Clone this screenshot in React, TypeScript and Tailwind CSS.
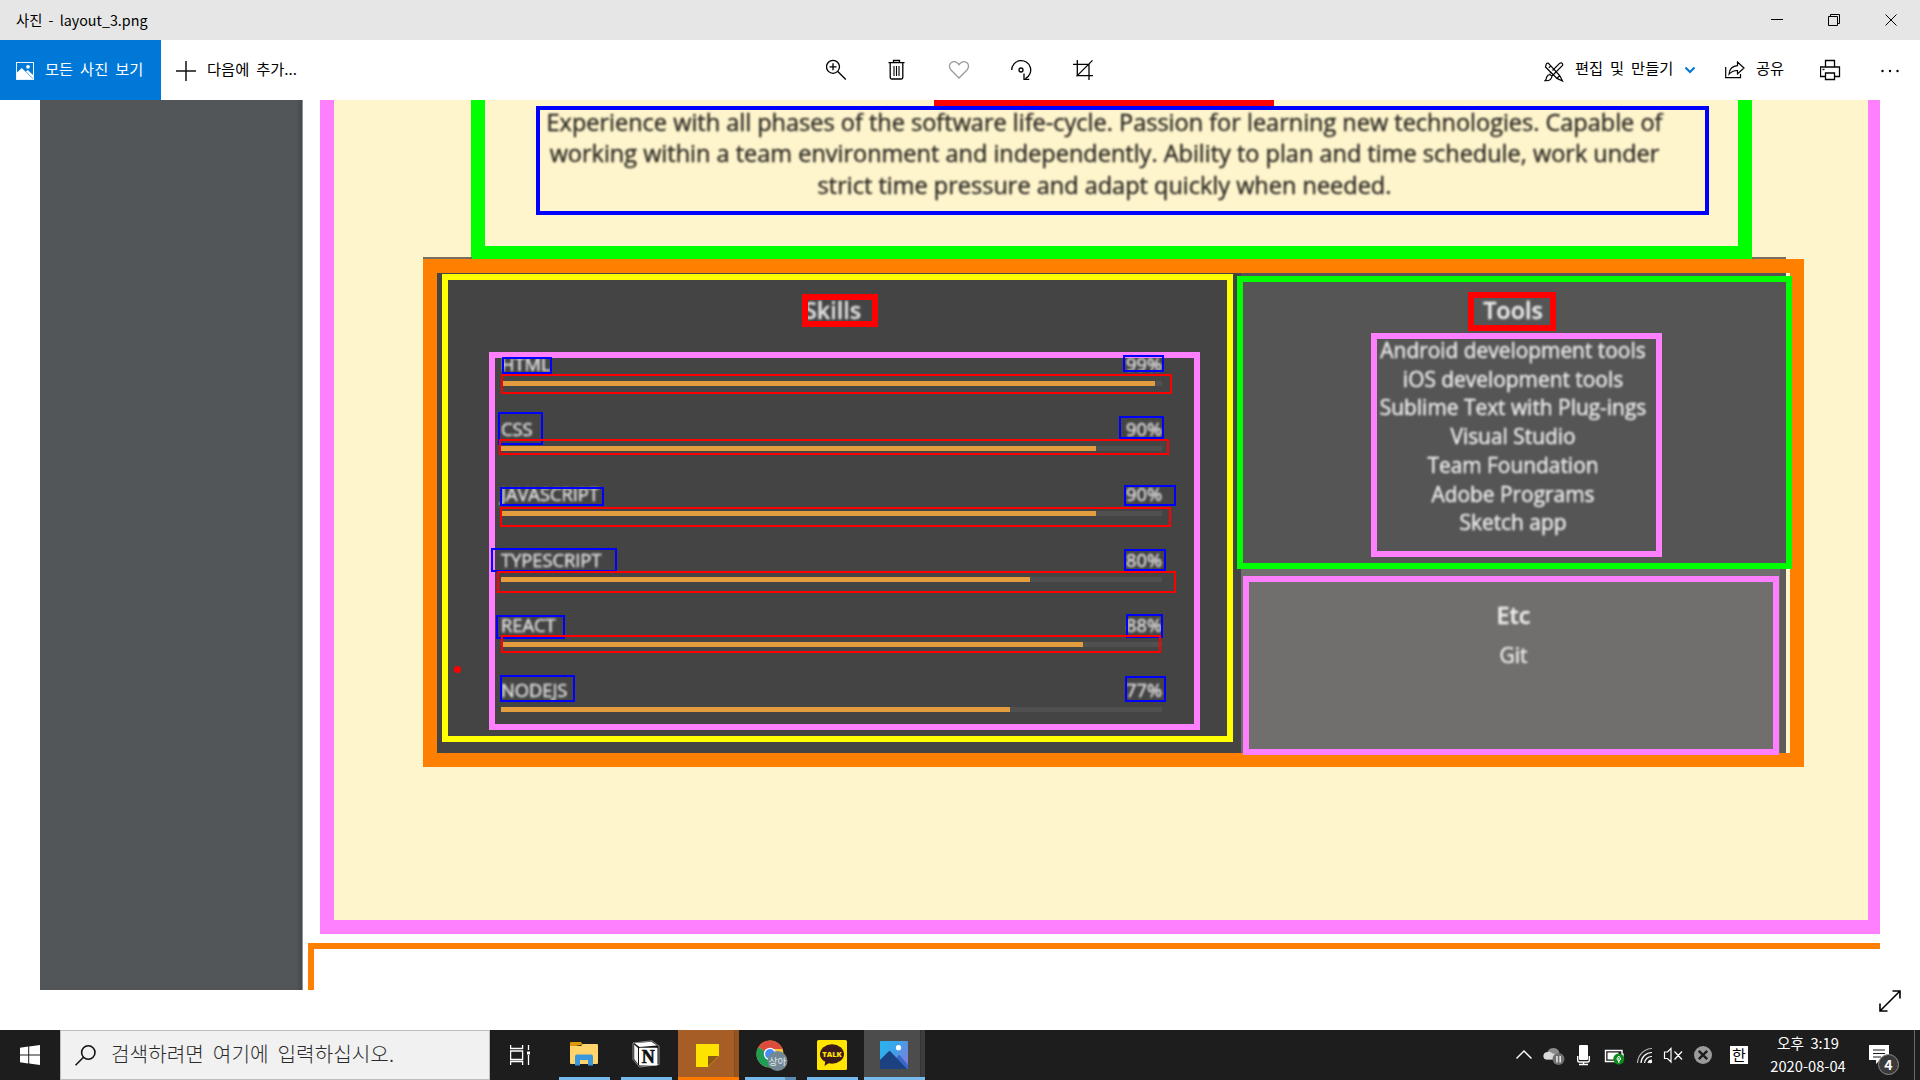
import React from "react";

type Mark = { x: number; y: number; r: number; b: number; w: number; c: string };

/* Hand-drawn rectangles on the photo, in screen pixels: left, top, right, bottom. */
const marks: Mark[] = [
  { x: 442, y: 274, r: 1233, b: 742, w: 6, c: "#ffff00" },
  { x: 802, y: 294, r: 878, b: 327, w: 6, c: "#ff0000" },
  { x: 489, y: 352, r: 1200, b: 730, w: 6, c: "#ff80ff" },
  { x: 1237, y: 276, r: 1792, b: 569, w: 6, c: "#00ff00" },
  { x: 1468, y: 292, r: 1556, b: 331, w: 6, c: "#ff0000" },
  { x: 1371, y: 333, r: 1662, b: 557, w: 6, c: "#ff80ff" },
  { x: 1243, y: 576, r: 1779, b: 755, w: 6, c: "#ff80ff" },
  { x: 502, y: 357, r: 552, b: 374, w: 2, c: "#0000ff" },
  { x: 498, y: 412, r: 543, b: 445, w: 2, c: "#0000ff" },
  { x: 500, y: 487, r: 604, b: 506, w: 2, c: "#0000ff" },
  { x: 491, y: 548, r: 617, b: 572, w: 2, c: "#0000ff" },
  { x: 496, y: 615, r: 565, b: 639, w: 2, c: "#0000ff" },
  { x: 500, y: 675, r: 575, b: 702, w: 2, c: "#0000ff" },
  { x: 1123, y: 355, r: 1164, b: 372, w: 2, c: "#0000ff" },
  { x: 1119, y: 416, r: 1164, b: 439, w: 2, c: "#0000ff" },
  { x: 1124, y: 485, r: 1176, b: 506, w: 2, c: "#0000ff" },
  { x: 1124, y: 549, r: 1166, b: 571, w: 2, c: "#0000ff" },
  { x: 1126, y: 614, r: 1163, b: 638, w: 2, c: "#0000ff" },
  { x: 1125, y: 676, r: 1166, b: 702, w: 2, c: "#0000ff" },
  { x: 501, y: 374, r: 1172, b: 394, w: 2, c: "#ff0000" },
  { x: 499, y: 439, r: 1169, b: 455, w: 2, c: "#ff0000" },
  { x: 500, y: 507, r: 1171, b: 527, w: 2, c: "#ff0000" },
  { x: 497, y: 571, r: 1176, b: 593, w: 2, c: "#ff0000" },
  { x: 501, y: 635, r: 1161, b: 653, w: 2, c: "#ff0000" },
];

const skills = [
  { name: "HTML", value: 99 },
  { name: "CSS", value: 90 },
  { name: "JAVASCRIPT", value: 90 },
  { name: "TYPESCRIPT", value: 80 },
  { name: "REACT", value: 88 },
  { name: "NODEJS", value: 77 },
];

const tools = [
  "Android development tools",
  "iOS development tools",
  "Sublime Text with Plug-ings",
  "Visual Studio",
  "Team Foundation",
  "Adobe Programs",
  "Sketch app",
];

function TitleBar() {
  return (
    <header className="flex h-[40px] shrink-0 items-center bg-[#e6e6e6] pl-[16px] text-black">
      <span className="grow text-[14.300px] leading-[20px] [word-spacing:3px] whitespace-pre">사진 - layout_3.png</span>
      <svg width="149" height="40" fill="none" stroke="#000" strokeWidth="1" className="shrink-0">
        <path d="M0 19.500h12" />
        <path d="M57.500 16.500h9v9h-9zM59.500 16v-1.500h9v9h-1.500" />
        <path d="M114.500 14.500l11 11M125.500 14.500l-11 11" />
      </svg>
    </header>
  );
}

function Toolbar() {
  return (
    <div className="flex h-[60px] shrink-0 bg-white text-[15.300px] leading-[20px] text-black [word-spacing:3.500px]">
      <div className="flex w-[161px] items-center bg-[#0078d7] pl-[16px] text-white">
        <svg width="18" height="18" viewBox="0 0 18 18" className="mt-[2px]">
          <rect x="0.500" y="0.500" width="17" height="17" fill="#0078d7" stroke="#e6f1fb" />
          <path d="M1 10.500L5.800 6 17 17H1z" fill="#fff" />
          <path d="M10 9.500l1.700-1.500L17 13v3.500z" fill="#fff" />
          <circle cx="12" cy="4.800" r="1.900" fill="#fff" />
        </svg>
        <span className="-mt-[4px] ml-[11px] whitespace-nowrap">모든 사진 보기</span>
      </div>
      <div className="flex w-[665px] items-center pl-[15px]">
        <svg width="20" height="20" stroke="#111" strokeWidth="1.500" className="mt-[2px]">
          <path d="M10 0v20M0 10h20" />
        </svg>
        <span className="-mt-[4px] ml-[11px] whitespace-nowrap">다음에 추가...</span>
      </div>
      <svg width="270" height="60" fill="none" stroke="#000" strokeWidth="1.300" className="shrink-0">
        <circle cx="7" cy="26.800" r="6.500" />
        <path d="M11.800 31.500l8 8M3.500 26.800h7M7 23.300v7" />
        <path d="M62.500 22.700h16M67.500 22.500v-2h6v2M64.200 23v14.500q0 1.500 1.500 1.500h9.600q1.500 0 1.500-1.500V23" />
        <path d="M68 26v10M70.500 26v10M73 26v10" strokeWidth="1.100" />
        <path
          d="M133 38l-8-8c-2.400-2.700-1.800-6 .4-7.500 2.500-1.700 5.800-.9 7.600 2.200 1.800-3.100 5.100-3.900 7.600-2.200 2.200 1.500 2.800 4.800.4 7.500z"
          stroke="#9a9a9a"
        />
        <path d="M185.700 30a9.500 9.500 0 1 1 13.700 8.600M198 33.500v5.800h5.200" />
        <circle cx="195" cy="30" r="2" />
        <path d="M251.300 20v15.600h15.600M247 24.300h16v15.600M250.500 36.400l16-16" />
      </svg>
      <div className="grow" />
      <svg width="20" height="20" viewBox="0 0 20 20" fill="none" stroke="#000" strokeWidth="1.200" className="mt-[22px]">
        <path d="M2 3.200q0-2.200 2.200-2.200l11.500 12.500 2.800 5.500-5.500-2.600L1.500 5zM4.800 5.800l2-2M13 16.400l2.700-2.900" />
        <path d="M8.500 8.500L15.800 1.200q1.400-.9 2.400.1t.1 2.400L8 14M5.800 11.500L7 10M8 14c-.4 3.500-3 5-7 4.700 1.500-1 1-2 1.700-3.600.6-1.400 1.800-2.500 3.100-2.600z" />
      </svg>
      <span className="mt-[17px] ml-[11px] w-[110px] whitespace-nowrap">편집 및 만들기</span>
      <svg width="10" height="60" fill="none" stroke="#0078d7" strokeWidth="2" className="shrink-0">
        <path d="M0.500 27.500l4.500 4.500 4.500-4.500" />
      </svg>
      <svg width="20" height="18" viewBox="0 0 20 18" fill="none" stroke="#000" strokeWidth="1.200" className="mt-[21px] ml-[30px]">
        <path d="M0.700 6v10.700h14.800V13" />
        <path d="M12.500 1l6.500 6-6.500 6V9.500c-4-.2-6 1-8.500 3.700C4.500 8 7.500 5 12.500 4.700z" />
      </svg>
      <span className="mt-[17px] ml-[11px] w-[64px] whitespace-nowrap">공유</span>
      <svg width="100" height="60" fill="none" stroke="#000" strokeWidth="1.300" className="shrink-0">
        <path d="M5.500 27v-6.500h9V27M5.500 36.500h-5V27h19v9.500h-5M5.500 33h9v6.500h-9z" />
        <path d="M2.500 29.500h2" />
        <g fill="#000" stroke="none">
          <circle cx="62.500" cy="31" r="1.200" />
          <circle cx="70" cy="31" r="1.200" />
          <circle cx="77.500" cy="31" r="1.200" />
        </g>
      </svg>
    </div>
  );
}

function SkillsPanel() {
  return (
    <div className="w-[804px] bg-[#444444] text-[#e0e0e0]">
      <h2 className="mt-[21px] ml-[367px] text-[23.400px] leading-[32px] font-semibold blur-[0.900px] [-webkit-text-stroke:0.300px]">
        Skills
      </h2>
      <ul className="mt-[26px] ml-[64px] w-[661px] text-[18.300px]">
        {skills.map((s) => (
          <li key={s.name} className="h-[65.200px]">
            <div className="flex h-[24px] items-end justify-between leading-[24px] blur-[0.900px] [-webkit-text-stroke:0.400px]">
              <span>{s.name}</span>
              <span>{s.value}%</span>
            </div>
            <div className="mt-[5px] h-[5px] bg-[#505050] blur-[0.700px]">
              <div className="h-full bg-[#e39c3e]" style={{ width: `${s.value}%` }} />
            </div>
          </li>
        ))}
      </ul>
    </div>
  );
}

function SidePanels() {
  return (
    <div className="flex w-[545px] flex-col text-center text-[#ececec]">
      <div className="h-[296px] bg-[#555555] pr-[1px]">
        <h2 className="mt-[21px] text-[23.400px] leading-[32px] font-semibold blur-[0.900px] [-webkit-text-stroke:0.300px]">
          Tools
        </h2>
        <ul className="mt-[10px] text-[20.900px] leading-[28.700px] blur-[0.900px] [-webkit-text-stroke:0.400px]">
          {tools.map((t) => (
            <li key={t}>{t}</li>
          ))}
        </ul>
      </div>
      <div className="grow border-r-[6px] border-[#5d5c5b] bg-[#706f6d] pt-[30px] pl-[6px]">
        <h2 className="text-[23.400px] leading-[32px] font-semibold blur-[0.900px] [-webkit-text-stroke:0.300px]">Etc</h2>
        <p className="mt-[10px] text-[20.900px] leading-[29px] blur-[0.900px] [-webkit-text-stroke:0.400px]">Git</p>
      </div>
    </div>
  );
}

function Photo() {
  return (
    <main className="relative mx-[40px] flex h-[890px] shrink-0 overflow-hidden bg-white font-['Open_Sans',sans-serif]">
      <div className="w-[263px] shrink-0 border-r border-[#8f9092] bg-[linear-gradient(90deg,#525659_0,#525659_256px,#46484c_262px)]" />
      <div className="grow">
        <section className="ml-[17px] h-[834px] border-r-[12px] border-b-[14px] border-l-[14px] border-[#ff80ff] bg-[#fff5cd]">
          <div className="ml-[137px] h-[159px] w-[1281px] border-x-[14px] border-b-[13px] border-[#00ff00]">
            <div className="ml-[449px] h-[6px] w-[340px] bg-[#ff0000]" />
            <div className="ml-[51px] h-[109px] w-[1173px] border-4 border-[#0000ff]">
              <p className="-mt-[3px] w-[1129px] text-center text-[23.500px] leading-[31.300px] whitespace-nowrap text-[#2c2a23] blur-[0.900px] [-webkit-text-stroke:0.400px]">
                Experience with all phases of the software life-cycle. Passion for learning new technologies. Capable of
                <br />
                working within a team environment and independently. Ability to plan and time schedule, work under
                <br />
                strict time pressure and adapt quickly when needed.
              </p>
            </div>
          </div>
          <div className="relative ml-[89px] flex h-[508px] w-[1381px] border-[14px] border-[#ff8000] bg-[#fff5cd]">
            <SkillsPanel />
            <SidePanels />
            <div className="absolute -top-[16px] -left-[14px] h-[2px] w-[49px] bg-[#77705f]" />
            <div className="absolute -top-[16px] left-[1315px] h-[2px] w-[34px] bg-[#77705f]" />
          </div>
        </section>
        <section className="mt-[9px] ml-[5px] h-[60px] border-t-[6px] border-l-[6px] border-[#ff8000]" />
      </div>
      {marks.map((m, i) => (
        <div
          key={i}
          className="absolute"
          style={{
            left: m.x - 40,
            top: m.y - 100,
            width: m.r - m.x,
            height: m.b - m.y,
            border: `${m.w}px solid ${m.c}`,
          }}
        />
      ))}
      <div className="absolute top-[566px] left-[414px] size-[7px] rounded-full bg-[#ff0000]" />
    </main>
  );
}

function TaskApp({ children, className = "" }: { children: React.ReactNode; className?: string }) {
  return (
    <div className={`flex h-full w-[51px] items-center justify-center border-b-[3px] border-[#76b9ed] pr-[2px] ${className}`}>
      {children}
    </div>
  );
}

function Taskbar() {
  return (
    <footer className="flex h-[50px] shrink-0 bg-[#1d1d1d] text-white">
      <div className="flex w-[60px] items-center justify-center">
        <svg width="20" height="20" viewBox="0 0 20 20" fill="#fff">
          <path d="M0 2.800l8.200-1.200V9.500H0zM9.200 1.400L20 0v9.500H9.200zM0 10.500h8.200v7.900L0 17.200zM9.200 10.500H20V20L9.200 18.600z" />
        </svg>
      </div>
      <div className="flex w-[430px] items-center border border-[#bdbdbd] bg-[#f1f1f1] text-[#2b2b2b]">
        <svg width="21" height="21" viewBox="0 0 21 21" fill="none" stroke="#111" strokeWidth="1.600" className="ml-[14px] shrink-0">
          <circle cx="13.300" cy="7.500" r="6.700" />
          <path d="M8.500 12.300L.5 20.300" />
        </svg>
        <span className="-mt-[2px] ml-[15px] text-[20.200px] leading-[28px] font-light whitespace-nowrap [word-spacing:4.500px]">
          검색하려면 여기에 입력하십시오.
        </span>
      </div>
      <div className="flex w-[69px] items-center pl-[20px]">
        <svg width="20" height="20" fill="none" stroke="#fff" strokeWidth="1.300">
          <path d="M.6 0v3.500h12V0M.6 6h12v8.500H.6zM.6 20v-3.500h12V20M18.500 0v5M18.500 10v10" />
          <path d="M17 6.500h3v3h-3z" fill="#fff" stroke="none" />
        </svg>
      </div>
      <TaskApp>
        <svg width="28" height="24" viewBox="0 0 28 24">
          <path d="M0 1q0-1 1-1h10l2 3h-2L0 5z" fill="#dd9a06" />
          <path d="M0 4h11l2-2h14q1 0 1 1v18q0 1-1 1H1q-1 0-1-1z" fill="#ffd46a" />
          <path d="M5 23.500v-9q0-2 2-2h14q2 0 2 2v9h-5V18h-8v5.500z" fill="#3a97dd" />
        </svg>
      </TaskApp>
      <TaskApp className="ml-[11px]">
        <svg width="28" height="28" viewBox="0 0 28 28">
          <path d="M1 3L20 .8 27 6v18.500L7.500 27 1 19.500z" fill="#111" stroke="#aaa" strokeWidth=".8" />
          <path d="M2.500 3.300L19.500 1.800 25 5.500 7.500 7z" fill="#fff" />
          <path d="M2.200 4.500L6 8v16l-3.800-5z" fill="#f5f5f5" />
          <rect x="7" y="7.800" width="18.500" height="17.800" rx="1" fill="#fff" />
          <text x="16.200" y="22.800" textAnchor="middle" fontSize="18" fontWeight="700" fill="#111" stroke="#111" strokeWidth=".6" className="font-['Liberation_Serif',serif]">
            N
          </text>
        </svg>
      </TaskApp>
      <div className="ml-[6px] flex w-[61px] items-center border-b-[3px] border-[#ff7800] bg-[linear-gradient(90deg,#a65e26_56px,#7b481f_56px,#94541f_57px)] pl-[18px]">
        <svg width="23" height="23" className="mt-[3px]">
          <path d="M0 0h23v12L12 23H0z" fill="#ffe300" />
          <path d="M12 12h11L12 23z" fill="#a65e26" />
          <path d="M12 12h10L12 22z" fill="#8a5a14" />
        </svg>
      </div>
      <div className="ml-[6px] flex w-[51px] flex-col">
        <svg width="32" height="32" viewBox="0 0 32 32" className="mt-[10px] ml-[11px]">
          <circle cx="14" cy="14" r="13.500" fill="#f7c83a" />
          <path d="M14 14L2.300 7.250A13.500 13.500 0 0 1 25.700 7.250L27 9H14z" fill="#dd4b3e" />
          <path d="M14 14L2.300 7.250A13.500 13.500 0 0 0 14 27.500l5-10z" fill="#1f9d57" />
          <circle cx="14" cy="14" r="6.200" fill="#fff" />
          <circle cx="14" cy="14" r="4.900" fill="#4a8af4" />
          <circle cx="21.500" cy="21" r="10" fill="#728994" />
          <text x="21.500" y="24.500" textAnchor="middle" fontSize="9.500" fill="#e4e9eb">상아</text>
        </svg>
        <div className="mt-auto flex h-[3px]">
          <div className="w-[40px] bg-[#76b9ed]" />
          <div className="grow bg-[#5a8db5]" />
        </div>
      </div>
      <TaskApp className="ml-[11px]">
        <svg width="30" height="30" viewBox="0 0 30 30" className="mt-[3px]">
          <rect width="30" height="30" rx="1.500" fill="#ffe500" />
          <ellipse cx="15" cy="14" rx="12" ry="9.700" fill="#391b1b" />
          <path d="M8.500 20l-1 6 6-4z" fill="#391b1b" />
          <text x="15" y="16.800" textAnchor="middle" fontSize="7.500" fontWeight="800" fill="#ffe500" className="font-['Open_Sans',sans-serif]">
            TALK
          </text>
        </svg>
      </TaskApp>
      <div className="ml-[6px] flex w-[61px] items-center border-b-[3px] border-[#76b9ed] bg-[linear-gradient(90deg,#4c4c4c_56px,#2b2b2b_56px,#3d3d3d_57px)] pl-[16px]">
        <svg width="28" height="28" viewBox="0 0 28 28" className="mt-[3px]">
          <defs>
            <linearGradient id="sky" x1="0" y1="0" x2="1" y2="0.600">
              <stop offset="0" stopColor="#28b4ee" />
              <stop offset="0.500" stopColor="#3aa5ea" />
              <stop offset="1" stopColor="#7a7fe0" />
            </linearGradient>
          </defs>
          <rect width="28" height="28" rx="1" fill="url(#sky)" />
          <path d="M10 28l8-13.500q1-1.200 2 0L28 24v4z" fill="#3767c8" />
          <path d="M0 19L8.500 10.500q1-.8 2 0L27 28H0z" fill="#1b4181" />
          <circle cx="18.500" cy="6.700" r="2.600" fill="#fff" />
        </svg>
      </div>
      <div className="grow" />
      <svg width="220" height="50" fill="none" stroke="#fff" strokeWidth="1.400" className="shrink-0">
        <path d="M6.500 28.500l7.500-7.500 7.500 7.500" />
        <g stroke="none">
          <path d="M37 29.500q-3.500 0-3.500-3.500t4-4q1.500-4 6-4 4 0 5.500 3.500l1.500 8z" fill="#8b8b8b" />
          <path d="M37 29.500q-3.500 0-3.500-3.500t4-4q3-1 5 1.500l7 1-4 5z" fill="#d9d9d9" />
          <circle cx="48.500" cy="29" r="6" fill="#6f6f6f" />
          <path d="M46.300 26h1.300v6.500h-1.300zM49.500 26h1.300v6.500h-1.300z" fill="#fff" />
          <rect x="69" y="15" width="9" height="15" rx="1" fill="#fff" />
        </g>
        <path d="M67.700 26v4.500q0 1.500 1.500 1.500h8.600q1.500 0 1.500-1.500V26M73.500 32v2.500M69 34.500h9" />
        <path d="M95.500 20.500h16.500v11H95.500zM113 23.500v5" />
        <path d="M97.500 22.500h11v7h-11z" fill="#fff" stroke="none" />
        <circle cx="108.800" cy="29" r="5.500" fill="#0c8a1c" stroke="none" />
        <path d="M108.800 26l2 3-2 2.300-2-2.300zM108.800 28v5" strokeWidth="1" />
        <g strokeWidth="1.200">
          <path d="M127.500 33a15 15 0 0 1 14.500-14.500" stroke="#b5b5b5" />
          <path d="M131 33a11 11 0 0 1 11-10.500" />
          <path d="M134.500 33a7 7 0 0 1 7.500-6.500" />
          <path d="M138 33a4 4 0 0 1 4-3" />
        </g>
        <circle cx="140.500" cy="31.700" r="1.600" fill="#fff" stroke="none" />
        <path d="M154.500 22h3l3.500-3.500v13.500l-3.500-3.500h-3zM164.500 21.500l7.500 8M172 21.500l-7.500 8" strokeWidth="1.200" />
        <circle cx="193" cy="25" r="9" fill="#9b9b9b" stroke="none" />
        <path d="M188.800 20.800l8.400 8.400M197.200 20.800l-8.400 8.400" stroke="#1d1d1d" strokeWidth="2.400" />
      </svg>
      <div className="mt-[16px] flex size-[18px] items-center justify-center bg-white text-[15px] leading-[18px] text-black">한</div>
      <div className="ml-[8px] flex w-[104px] flex-col items-center pt-[1px] text-[14.700px] leading-[23px]">
        <span className="[word-spacing:3px]">오후 3:19</span>
        <span>2020-08-04</span>
      </div>
      <svg width="52" height="50" className="ml-[8px] shrink-0">
        <path d="M1 15h20v15h-9l-4 4v-4H1z" fill="#fff" />
        <path d="M5 20h12M5 23.500h12M5 27h8" stroke="#1d1d1d" strokeWidth="1.200" />
        <circle cx="20.500" cy="34.500" r="10" fill="#3a3a3a" stroke="#8e8e8e" />
        <text x="20.500" y="39.500" textAnchor="middle" fontSize="14" fontWeight="700" fill="#fff">4</text>
        <path d="M46.500 0v50" stroke="#6a6a6a" />
      </svg>
    </footer>
  );
}

export default function App() {
  return (
    <div className="flex h-[1080px] w-[1920px] flex-col overflow-hidden bg-white font-['Noto_Sans_CJK_KR','Open_Sans',sans-serif]">
      <TitleBar />
      <Toolbar />
      <Photo />
      <div className="flex h-[40px] shrink-0 justify-end pr-[19px]">
        <svg width="22" height="22" fill="none" stroke="#000" strokeWidth="1.600">
          <path d="M1.500 20.500l19-19M13.500 1h7.500v7.500M1 13.500V21h7.500" />
        </svg>
      </div>
      <Taskbar />
    </div>
  );
}
